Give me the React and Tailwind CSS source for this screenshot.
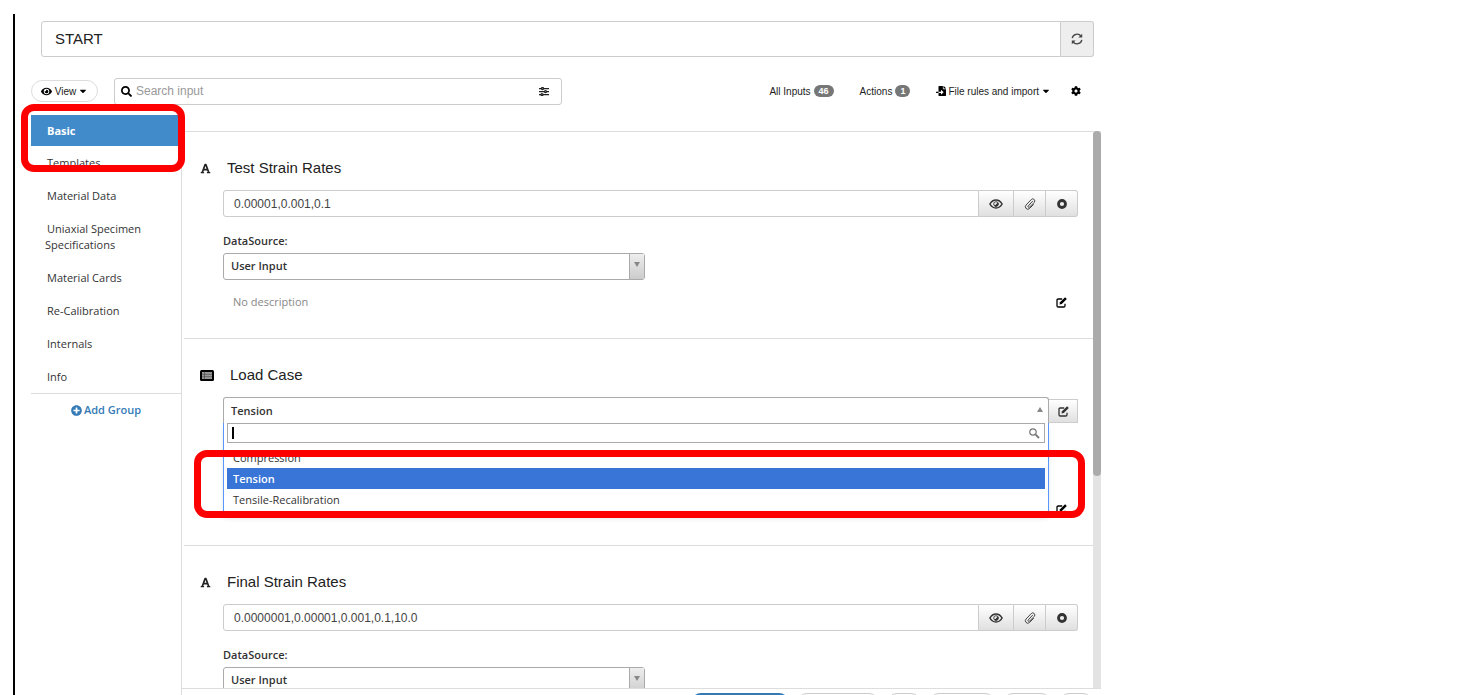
import React, { useState } from "react";
import {
  FaCaretDown,
  FaCog,
  FaEye,
  FaFileImport,
  FaFont,
  FaPlusCircle,
  FaSearch,
} from "react-icons/fa";

const groups = [
  "Basic",
  "Templates",
  "Material Data",
  "Uniaxial Specimen Specifications",
  "Material Cards",
  "Re-Calibration",
  "Internals",
  "Info",
];

const loadCases = ["Compression", "Tension", "Tensile-Recalibration"];

const RefreshIcon = () => (
  <svg viewBox="0 0 12 12" className="size-3" fill="none" stroke="currentColor" strokeWidth="1.3">
    <path d="M1.2 5.2A4.9 4.9 0 0 1 10 3.2M10.8 6.8A4.9 4.9 0 0 1 2 8.8" />
    <path d="M11.2 0.8v3.8H7.4zM0.8 11.2V7.4h3.8z" fill="currentColor" stroke="none" />
  </svg>
);

const EditIcon = () => (
  <svg viewBox="0 0 11 11" className="size-[11px]" fill="none" stroke="currentColor">
    <path d="M6.2 2H2.3Q1 2 1 3.3v5.4Q1 10 2.3 10h5.4Q9 10 9 8.700V6.800" strokeWidth="1.3" />
    <path d="M9.100 0.200l1.700 1.700-5 5.200-2.300.500.500-2.300z" fill="currentColor" stroke="none" />
  </svg>
);

const EyeIcon = () => (
  <svg viewBox="0 0 14 10" className="h-2.5 w-3.5" fill="none" stroke="currentColor">
    <path d="M0.900 5Q3.200 1 7 1t6.100 4Q10.800 9 7 9T0.900 5z" strokeWidth="1.500" />
    <circle cx="7" cy="5" r="2.300" strokeWidth="0.900" />
    <path d="M8.800 3.200A2.500 2.500 0 0 1 5.200 6.800L7 5.400z" fill="currentColor" stroke="none" />
  </svg>
);

const ClipIcon = () => (
  <svg viewBox="0 0 12 12" className="size-3" fill="none" stroke="currentColor" strokeLinecap="round">
    <path
      d="M8.600 3.200L4.300 7.900a.9.900 0 0 0 1.400 1.200L10.200 4.400A2 2 0 0 0 7.300 1.500L2.100 7A2.400 2.400 0 0 0 5.500 10.500L9.500 6.500"
      strokeWidth="0.900"
    />
  </svg>
);

const SlidersIcon = () => (
  <svg viewBox="0 0 20 18" className="h-[9px] w-2.5" fill="#fff" stroke="currentColor" strokeWidth="2.500">
    <path d="M0 3h20M0 9h20M0 15h20" />
    <circle cx="7" cy="3" r="2" />
    <circle cx="13" cy="9" r="2" />
    <circle cx="6" cy="15" r="2" />
  </svg>
);

const ListIcon = () => (
  <svg viewBox="0 0 14 11" className="h-[11px] w-3.5">
    <rect width="14" height="11" rx="1.5" fill="#000" />
    <rect x="2" y="2" width="10" height="7" fill="#999" />
    <path d="M2 4.3h10M2 6.7h10M4.5 2v7" stroke="#333" strokeWidth="0.5" />
  </svg>
);

const RingIcon = () => (
  <svg viewBox="0 0 10 10" className="size-2.5" fill="none" stroke="currentColor">
    <circle cx="5" cy="5" r="3.5" strokeWidth="2.800" />
  </svg>
);

const LensIcon = () => (
  <svg viewBox="0 0 11 11" className="size-[11px]" fill="none" stroke="#777">
    <circle cx="4" cy="4" r="3.2" strokeWidth="1.2" />
    <path d="M6.4 6.4L10 10" strokeWidth="1.8" />
  </svg>
);

const Badge = ({ children }) => (
  <span className="rounded-full bg-[#777] px-[5px] text-[9px] leading-3 font-bold text-white">
    {children}
  </span>
);

const SectionTitle = ({ icon, children }) => (
  <h2 className="flex h-6 items-center gap-4 pl-4 text-[15px] text-[#222]">
    {icon}
    {children}
  </h2>
);

const AddonButton = ({ label, className, children }) => (
  <button
    aria-label={label}
    className={`flex items-center justify-center border border-l-0 border-[#ccc] bg-linear-to-b from-white to-[#e0e0e0] text-[#333] ${className}`}
  >
    {children}
  </button>
);

const StrainSection = ({ id, title, value, description }) => {
  const [text, setText] = useState(value);

  return (
    <section className="border-b border-[#ddd] pt-6 pb-[26px]">
      <SectionTitle icon={<FaFont className="size-[11px]" />}>{title}</SectionTitle>
      <div className="pr-[15px] pl-[39px]">
        <div className="mt-2.5 flex h-[27px]">
          <input
            aria-label={title}
            value={text}
            onChange={(e) => setText(e.target.value)}
            className="min-w-0 flex-1 rounded-l-[3px] border border-[#ccc] px-2.5 text-xs text-[#444] outline-none"
          />
          <AddonButton label="Preview" className="w-[35px]">
            <EyeIcon />
          </AddonButton>
          <AddonButton label="Attach" className="w-8">
            <ClipIcon />
          </AddonButton>
          <AddonButton label="Record" className="w-8 rounded-r-[3px]">
            <RingIcon />
          </AddonButton>
        </div>
        <label
          htmlFor={id}
          className="mt-4 block font-['Open_Sans',sans-serif] text-[11px] leading-4 font-semibold text-[#333]"
        >
          DataSource:
        </label>
        <div className="relative mt-1 h-[27px] w-[422px] max-w-full">
          <select
            id={id}
            className="h-full w-full appearance-none rounded-[3px] border border-[#aaa] bg-white px-[7px] font-['Open_Sans',sans-serif] text-[11px] font-semibold text-[#333] outline-none"
          >
            <option>User Input</option>
          </select>
          <span className="pointer-events-none absolute inset-y-px right-px flex w-[15px] items-center justify-center border-l border-[#aaa] bg-linear-to-b from-[#eee] to-[#ccc] pb-1">
            <svg viewBox="0 0 6 5" className="h-[5px] w-1.5">
              <path d="M0 0h6L3 5z" fill="#888" />
            </svg>
          </span>
        </div>
        {description && (
          <div className="mt-3 flex h-5 items-center justify-between pr-[11px] pl-2.5">
            <span className="font-['Open_Sans',sans-serif] text-[11px] text-[#888]">{description}</span>
            <button aria-label="Edit description">
              <EditIcon />
            </button>
          </div>
        )}
      </div>
    </section>
  );
};

const LoadCaseSection = () => {
  const [selected, setSelected] = useState("Tension");

  return (
    <section className="relative border-b border-[#ddd] pt-6 pb-[26px]">
      <SectionTitle icon={<ListIcon />}>Load Case</SectionTitle>
      <div className="pr-[15px] pl-[39px]">
        <div className="mt-2.5 flex h-[27px]">
          <div className="relative min-w-0 flex-1">
            <button
              aria-haspopup="listbox"
              aria-expanded="true"
              className="flex h-full w-full items-center justify-between rounded-t-[3px] border border-b-0 border-[#aaa] px-[7px] pr-[5px] font-['Open_Sans',sans-serif] text-[11px] font-semibold text-[#333]"
            >
              {selected}
              <svg viewBox="0 0 6 5" className="mb-1 h-[5px] w-1.5">
                <path d="M0 5h6L3 0z" fill="#888" />
              </svg>
            </button>
            <div className="absolute inset-x-0 top-[26px] z-10 border border-t-0 border-[#5897fb] bg-white px-[3px] pb-1 shadow-md">
              <div className="flex h-5 items-center border border-[#aaa] pr-1">
                <input
                  autoFocus
                  aria-label="Search load case"
                  className="ml-1 h-3 min-w-0 flex-1 border-l-2 border-black px-1 text-[11px] caret-transparent outline-none"
                />
                <LensIcon />
              </div>
              <ul role="listbox" aria-label="Load Case" className="mt-1">
                {loadCases.map((item) => (
                  <li
                    key={item}
                    role="option"
                    aria-selected={item === selected}
                    onClick={() => setSelected(item)}
                    className={`h-[21px] px-1.5 font-['Open_Sans',sans-serif] text-[11px] leading-[21px] ${
                      item === selected ? "bg-[#3875d7] font-semibold text-white" : "text-[#333]"
                    }`}
                  >
                    {item}
                  </li>
                ))}
              </ul>
            </div>
          </div>
          <AddonButton label="Edit load case" className="mt-0.5 mb-px w-[29px]">
            <EditIcon />
          </AddonButton>
        </div>
        <div className="mt-[75px] flex h-5 items-center justify-end pr-[11px]">
          <button aria-label="Edit description">
            <EditIcon />
          </button>
        </div>
      </div>
      <div className="pointer-events-none absolute top-[111px] right-2 left-2.5 z-20 h-[68px] rounded-[13px] border-[7px] border-[#fe0000]" />
    </section>
  );
};

const App = () => {
  const [active, setActive] = useState("Basic");

  return (
    <div className="h-screen overflow-hidden bg-white pt-3.5 font-['Liberation_Sans',Arial,sans-serif] text-black">
      <div className="ml-[13px] flex h-full max-w-[1088px] flex-col border-l-2 border-black">
        <header className="mt-[7px] mr-[7px] ml-[26px] flex h-9 shrink-0">
          <input
            aria-label="Name"
            defaultValue="START"
            className="min-w-0 flex-1 rounded-l-[3px] border border-[#ccc] px-[13px] text-[15px] text-[#222] outline-none"
          />
          <button
            aria-label="Refresh"
            className="flex w-[33px] items-center justify-center rounded-r-[3px] border border-l-0 border-[#ccc] bg-[#eee] text-[#444]"
          >
            <RefreshIcon />
          </button>
        </header>

        <div className="mt-5 mr-5 ml-4 flex h-7 shrink-0 items-center text-[10px] text-[#222]">
          <button className="flex h-[22px] w-[67px] items-center justify-center gap-[3px] rounded-full border border-[#ddd]">
            <FaEye className="size-[11px] text-black" />
            <span className="flex items-center gap-0.5">
              View
              <FaCaretDown className="size-2.5 text-black" />
            </span>
          </button>
          <div className="ml-4 flex h-[27px] w-[448px] items-center rounded-[3px] border border-[#ccc] pr-3 pl-1.5">
            <FaSearch className="size-[11px] text-black" />
            <input
              aria-label="Search input"
              placeholder="Search input"
              className="ml-1 min-w-0 flex-1 text-xs outline-none placeholder:text-[#999]"
            />
            <button aria-label="Filters">
              <SlidersIcon />
            </button>
          </div>
          <div className="ml-auto flex items-center gap-[26px]">
            <button className="flex items-center gap-[3px]">
              All Inputs <Badge>46</Badge>
            </button>
            <button className="flex items-center gap-[3px]">
              Actions <Badge>1</Badge>
            </button>
            <button className="flex items-center gap-0.5">
              <FaFileImport className="size-2.5 text-black" />
              File rules and import
              <FaCaretDown className="size-2.5 text-black" />
            </button>
            <button aria-label="Settings" className="-ml-1.5">
              <FaCog className="size-2.5 text-black" />
            </button>
          </div>
        </div>

        <div className="mt-2.5 flex min-h-0 flex-1">
          <aside className="relative ml-4 w-[151px] shrink-0 border-r border-[#ddd] font-['Open_Sans',sans-serif] text-[11px] leading-4 text-[#333]">
            <nav className="border-b border-[#ddd]">
              {groups.map((group) => (
                <a
                  key={group}
                  href="#"
                  onClick={() => setActive(group)}
                  className={`block pt-2 pr-5 pl-3.5 ${
                    group === active ? "bg-[#428bca] pb-[7px] font-bold text-white" : "mt-px pb-2"
                  }`}
                >
                  <span className="pl-0.5">{group}</span>
                </a>
              ))}
            </nav>
            <button className="mt-2 flex w-full items-center justify-center gap-0.5 font-semibold text-[#337ab7]">
              <FaPlusCircle className="size-[11px]" />
              Add Group
            </button>
            <div className="pointer-events-none absolute -top-[11px] -right-1 -left-2.5 h-[68px] rounded-[13px] border-[7px] border-[#fe0000]" />
          </aside>

          <div className="flex min-w-0 flex-1 flex-col pt-4">
            <main className="flex min-h-0 flex-1">
              <div className="ml-0.5 min-w-0 flex-1 overflow-hidden border-t border-[#ddd]">
                <StrainSection
                  id="test-source"
                  title="Test Strain Rates"
                  value="0.00001,0.001,0.1"
                  description="No description"
                />
                <LoadCaseSection />
                <StrainSection
                  id="final-source"
                  title="Final Strain Rates"
                  value="0.0000001,0.00001,0.001,0.1,10.0"
                />
              </div>
              <div className="w-2 bg-[#e3e3e3]">
                <div className="h-[62%] rounded-full bg-[#ababab]" />
              </div>
            </main>
            <footer className="flex h-[7px] shrink-0 justify-end gap-2 overflow-hidden border-t border-[#ddd] pt-1 pr-2">
              <button aria-label="Save" className="h-7 w-[98px] rounded-[10px] bg-[#337ab7]" />
              <button aria-label="Save as" className="h-7 w-[82px] rounded-[10px] border border-[#ccc]" />
              <button aria-label="Undo" className="h-7 w-[34px] rounded-[10px] border border-[#ccc]" />
              <button aria-label="Download" className="h-7 w-[66px] rounded-[10px] border border-[#ccc]" />
              <button aria-label="Close" className="h-7 w-12 rounded-[10px] border border-[#ccc]" />
              <button aria-label="More" className="h-7 w-[34px] rounded-[10px] border border-[#ccc]" />
            </footer>
          </div>
        </div>
      </div>
    </div>
  );
};

export default App;
